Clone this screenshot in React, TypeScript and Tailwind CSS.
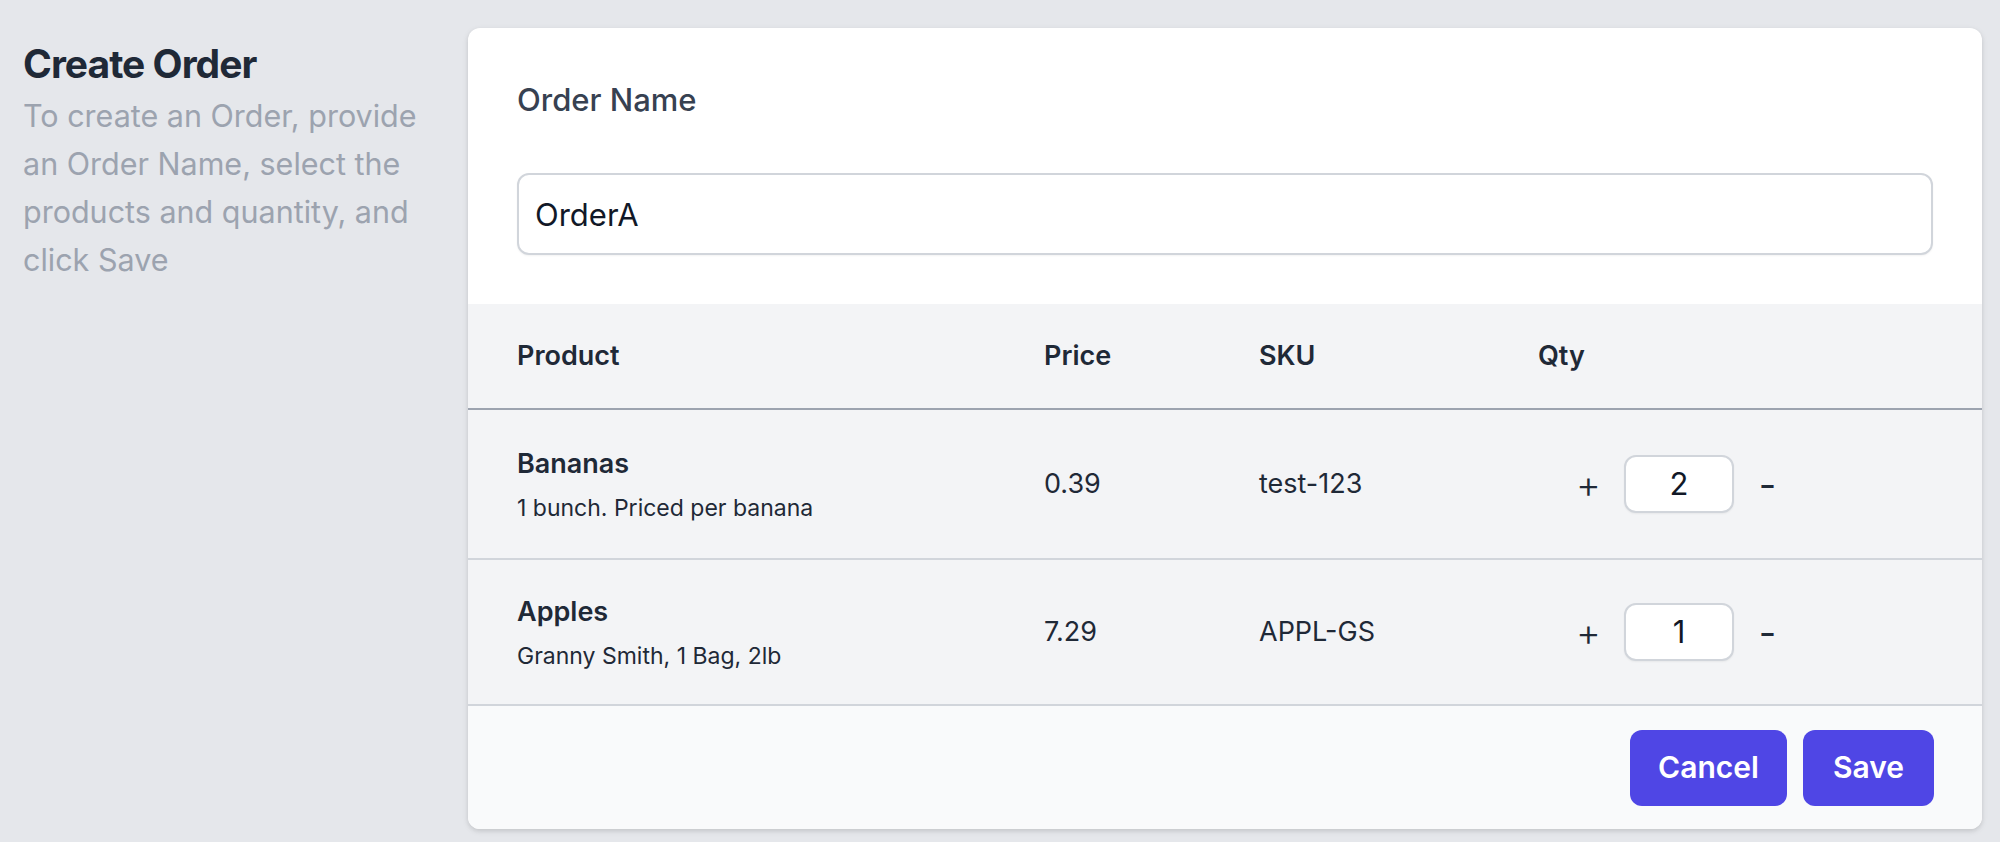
import React from "react";

const rows = [
  { name: "Bananas", desc: "1 bunch. Priced per banana", price: "0.39", sku: "test-123", qty: "2", h: "h-[148px]" },
  { name: "Apples", desc: "Granny Smith, 1 Bag, 2lb", price: "7.29", sku: "APPL-GS", qty: "1", h: "h-[144px]" },
];

export default function App() {
  return (
    <div className="w-[2000px] min-h-[842px] bg-[#e5e7eb] flex items-start pt-[28px] pl-[23px] pr-[18px] font-['Inter','Noto_Sans',sans-serif]">
      <div className="w-[422px] shrink-0">
        <h1 className="mt-[8px] text-[39px] leading-[56px] font-bold tracking-tight text-[#1f2937]">Create Order</h1>
        <p className="w-[410px] text-[30.5px] leading-[48px] text-[#9ca3af]">
          To create an Order, provide an Order Name, select the products and quantity, and click Save
        </p>
      </div>
      <div className="ml-[23px] flex-1 bg-white rounded-[12px] overflow-hidden shadow-[0_2px_6px_rgba(0,0,0,0.1),0_2px_4px_rgba(0,0,0,0.06)]">
        <div className="px-[49px] pt-[48px] pb-[49px]">
          <label className="block text-[31px] leading-[48px] font-medium text-[#374151]">Order Name</label>
          <input
            readOnly
            value="OrderA"
            className="mt-[49px] block w-full h-[82px] border-2 border-[#d1d5db] rounded-[12px] px-[16px] text-[31px] text-[#111827] bg-white shadow-[0_1px_2px_rgba(0,0,0,0.05)] outline-none"
          />
        </div>
        <div className="grid grid-cols-[527px_215px_279px_1fr] items-center pl-[49px] h-[106px] bg-[#f3f4f6] border-b-2 border-[#9ca3af] text-[27px] font-semibold text-[#1f2937]">
          <div>Product</div>
          <div>Price</div>
          <div>SKU</div>
          <div>Qty</div>
        </div>
        {rows.map((r) => (
          <div
            key={r.name}
            className={`grid grid-cols-[527px_215px_279px_1fr] items-center pl-[49px] bg-[#f3f4f6] border-b-2 border-[#d1d5db] box-content ${r.h}`}
          >
            <div>
              <div className="text-[27px] leading-[40px] font-semibold text-[#1f2937]">{r.name}</div>
              <div className="mt-[8px] text-[23px] leading-[32px] text-[#1f2937]">{r.desc}</div>
            </div>
            <div className="text-[27px] text-[#1f2937]">{r.price}</div>
            <div className="text-[27px] text-[#1f2937]">{r.sku}</div>
            <div className="flex items-center text-[#1f2937]">
              <span className="ml-[41px] w-[19px] flex justify-center text-[38px] leading-none font-light">+</span>
              <div className="ml-[26px] w-[110px] h-[58px] flex items-center justify-center bg-white border-2 border-[#d1d5db] rounded-[12px] shadow-[0_1px_2px_rgba(0,0,0,0.05)] text-[31px] text-[#111827]">
                {r.qty}
              </div>
              <span className="ml-[27px] w-[13px] flex justify-center text-[38px] leading-none">-</span>
            </div>
          </div>
        ))}
        <div className="h-[123px] bg-[#f9fafb] flex items-center justify-end gap-[16px] pr-[48px]">
          <button className="w-[157px] h-[76px] rounded-[12px] bg-[#4f46e5] text-white text-[30px] font-semibold">Cancel</button>
          <button className="w-[131px] h-[76px] rounded-[12px] bg-[#4f46e5] text-white text-[30px] font-semibold">Save</button>
        </div>
      </div>
    </div>
  );
}
